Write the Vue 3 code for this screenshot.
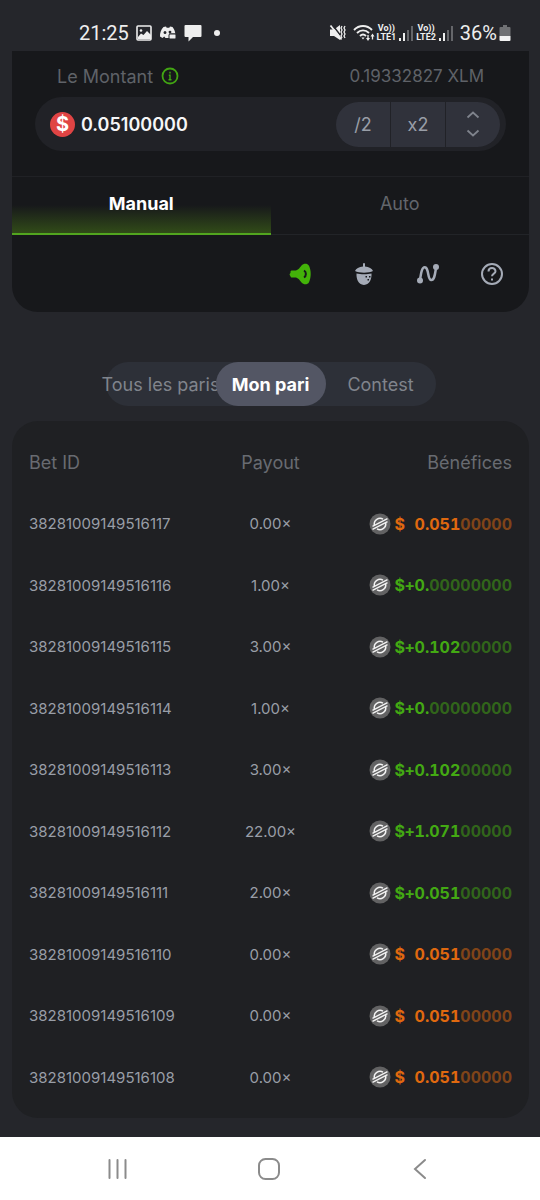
<script setup>
import { ref } from 'vue'

const amount = ref('0.05100000')
const mode = ref('Manual')
const modes = ['Manual', 'Auto']
const list = ref('Mon pari')
const lists = ['Tous les paris', 'Mon pari', 'Contest']

const bets = [
  { id: '38281009149516117', payout: '0.00', sign: '', main: '0.051', rest: '00000' },
  { id: '38281009149516116', payout: '1.00', sign: '+', main: '0.', rest: '00000000' },
  { id: '38281009149516115', payout: '3.00', sign: '+', main: '0.102', rest: '00000' },
  { id: '38281009149516114', payout: '1.00', sign: '+', main: '0.', rest: '00000000' },
  { id: '38281009149516113', payout: '3.00', sign: '+', main: '0.102', rest: '00000' },
  { id: '38281009149516112', payout: '22.00', sign: '+', main: '1.071', rest: '00000' },
  { id: '38281009149516111', payout: '2.00', sign: '+', main: '0.051', rest: '00000' },
  { id: '38281009149516110', payout: '0.00', sign: '', main: '0.051', rest: '00000' },
  { id: '38281009149516109', payout: '0.00', sign: '', main: '0.051', rest: '00000' },
  { id: '38281009149516108', payout: '0.00', sign: '', main: '0.051', rest: '00000' },
]
</script>

<template>
  <div class="screen">
    <header class="status">
      <div class="status-side">
        <span class="clock">21:25</span>
        <svg width="16" height="16" viewBox="0 0 16 16">
          <rect x="1" y="1" width="14" height="14" rx="1" fill="none" stroke="#eee" stroke-width="1.6" />
          <circle cx="5" cy="5.5" r="1.3" fill="#eee" />
          <path d="M2 12l3-3.500 2.500 1.500L11 6l4 4v4H2z" fill="#eee" />
        </svg>
        <svg width="18" height="16" viewBox="0 0 18 16">
          <path d="M4.500 2L7 1.500l.7 1.200h2.600l.7-1.200 2.500.5c1.500 1.700 2.500 4 2.800 6.500H10v4.500H6.500L5.200 11.500 3.500 13 1 11.500C.8 8 2 4.500 4.500 2z" fill="#eee" />
          <ellipse cx="6" cy="7.500" rx="1.400" ry="1.600" fill="#25262b" />
          <ellipse cx="11" cy="7" rx="1.400" ry="1.300" fill="#25262b" />
          <rect x="10" y="9" width="7" height="5" rx="1" fill="#eee" stroke="#25262b" />
        </svg>
        <svg width="18" height="18" viewBox="0 0 18 18">
          <path d="M1.500 1h15a1 1 0 011 1v10a1 1 0 01-1 1H9l-4.500 4.500V13h-3a1 1 0 01-1-1V2a1 1 0 011-1z" fill="#eee" />
        </svg>
        <span class="dot"></span>
      </div>
      <div class="status-side tight">
        <svg width="18" height="18" viewBox="0 0 18 18">
          <path d="M1 5.500h4L11 1v15L5 12H1z" fill="#eee" />
          <path d="M3.500 1l10 13" stroke="#25262b" stroke-width="1.500" />
          <path d="M1.500 1.500l11 14" stroke="#eee" stroke-width="1.800" />
          <path d="M13 2l-1 2 1 2-1 2 1 2-1 2 1 2M16 2l-1 2 1 2-1 2 1 2-1 2 1 2" fill="none" stroke="#eee" stroke-width="1.300" />
        </svg>
        <svg class="wifi" width="22" height="18" viewBox="0 0 22 18">
          <g fill="none" stroke="#eee" stroke-width="1.900">
            <path d="M1 6c5-5.300 13-5.300 18 0M4 9c3.500-3.500 8.500-3.500 12 0M7 12c2-2 4-2 6 0" />
            <path d="M15 11v4M19.500 15.500v-4" stroke-width="1.300" />
          </g>
          <path d="M8.500 13.500h3L10 15.500zM13 14h4l-2 3zM17.500 12.500h4l-2-3z" fill="#eee" />
        </svg>
        <span class="lte"><span>Vo))</span><span>LTE1</span></span>
        <svg class="bars" width="16" height="16" viewBox="0 0 16 16">
          <path d="M2 16v-3M6 16V8" stroke="#eee" stroke-width="2" />
          <path d="M10 16V5M14 16V1" stroke="#65666a" stroke-width="2" />
        </svg>
        <span class="lte"><span>Vo))</span><span>LTE2</span></span>
        <svg class="bars" width="16" height="16" viewBox="0 0 16 16">
          <path d="M2 16v-3M6 16V8" stroke="#eee" stroke-width="2" />
          <path d="M10 16V5M14 16V1" stroke="#65666a" stroke-width="2" />
        </svg>
        <span class="percent">36%</span>
        <svg width="12" height="18" viewBox="0 0 12 18">
          <path d="M4 1h4v2h2.500a1 1 0 011 1v8H.5V4a1 1 0 011-1H4z" fill="#707174" />
          <path d="M.5 12h11v4a1 1 0 01-1 1h-9a1 1 0 01-1-1z" fill="#f3f3f3" />
        </svg>
      </div>
    </header>

    <main>
      <section class="panel">
        <div class="caption">
          <label for="amount">Le Montant</label>
          <svg width="18" height="18" viewBox="0 0 18 18">
            <circle cx="9" cy="9" r="7.500" fill="none" stroke="#42a513" stroke-width="1.800" />
            <path d="M9 7.500v5.500M9 4.700v1.700M7.800 8.200H9M7.500 12.800h3" stroke="#42a513" stroke-width="1.400" />
          </svg>
          <span class="balance">0.19332827 XLM</span>
        </div>
        <div class="field">
          <span class="coin">$</span>
          <input id="amount" v-model="amount" type="text" />
          <div class="steps">
            <button type="button">/2</button>
            <button type="button">x2</button>
            <button type="button" aria-label="Ajuster">
              <svg width="14" height="26" viewBox="0 0 14 26">
                <path d="M1.500 6.500L7 1.500l5.500 5M1.500 19.500l5.500 5 5.500-5" fill="none" stroke="#7f838c" stroke-width="1.800" />
              </svg>
            </button>
          </div>
        </div>

        <div class="tabs">
          <button v-for="m in modes" :key="m" type="button" :class="{ active: m === mode }" @click="mode = m">{{ m }}</button>
        </div>

        <div class="tools">
          <button type="button" aria-label="Son">
            <svg width="24" height="24" viewBox="0 0 24 24">
              <path d="M4 8.500h3c3 0 4.500-2.500 6.500-5 2-2.300 6-2.500 7.500.3 2.300 4.800 2.300 11.600 0 16.400-1.500 2.800-5.500 2.600-7.500.3-2-2.500-3.500-5-6.500-5H4c-1 0-1.500-.5-1.500-1.300l-.8-1.200c-.2-.8 0-1.500.8-2V10c0-1 .5-1.500 1.500-1.500z" fill="#43b309" />
              <path d="M16 8.500c2.500 1.500 2.500 5.500 0 7" fill="none" stroke="#17181b" stroke-width="2" />
            </svg>
          </button>
          <button type="button" aria-label="Gland">
            <svg width="24" height="24" viewBox="0 0 24 24" fill="#a5abb7">
              <path d="M11 1.500q1-1 2 0v3c4 .3 7 2 8 4.500-4 2.300-14 2.300-18 0 1-2.500 4-4.200 8-4.500z" />
              <path d="M4.500 11.500c4 1 11 1 15 0 .3 5-1.500 11-7.500 11.500-6-.5-7.800-6.500-7.500-11.500z" />
              <path d="M13.500 14h1.500v1.500h-1.500zM17 14h1.500v1.500H17zM15.500 17h1.500v1.500h-1.500z" fill="#17181b" />
            </svg>
          </button>
          <button type="button" aria-label="Tendance">
            <svg width="24" height="24" viewBox="0 0 24 24">
              <path d="M4 18C5 11 6 4 9.500 5.500c3.500 1.500 2 12 5.500 12.500C18.500 18.500 19 12 20 6" fill="none" stroke="#a5abb7" stroke-width="2.500" />
              <circle cx="4" cy="18.500" r="3" fill="#a5abb7" />
              <circle cx="20" cy="5" r="3" fill="#a5abb7" />
            </svg>
          </button>
          <button type="button" aria-label="Aide">
            <svg width="24" height="24" viewBox="0 0 24 24" fill="none" stroke="#a5abb7" stroke-width="2">
              <circle cx="12" cy="12" r="10" />
              <path d="M8.500 9.500C8.500 5 15.500 5 15.500 9.300c0 2.500-3.500 2.200-3.500 5M12 16.500v2" />
            </svg>
          </button>
        </div>
      </section>

      <div class="switch">
        <button v-for="l in lists" :key="l" type="button" :class="{ active: l === list }" @click="list = l">{{ l }}</button>
      </div>

      <section class="bets">
        <table>
          <thead>
            <tr><th>Bet ID</th><th>Payout</th><th>Bénéfices</th></tr>
          </thead>
          <tbody>
            <tr v-for="b in bets" :key="b.id">
              <td>{{ b.id }}</td>
              <td>{{ b.payout }}×</td>
              <td>
                <div class="profit" :class="{ win: b.sign }">
                  <svg width="22" height="22" viewBox="0 0 22 22">
                    <circle cx="11" cy="11" r="10.500" fill="#626263" />
                    <g fill="none" stroke="#f2f2f2" stroke-width="1.500">
                      <path d="M5.300 12A5.800 5.800 0 0114 6.200M16.700 10A5.800 5.800 0 018 15.800" />
                      <path d="M3.500 13.300L18.500 5.700M3.500 16.300L18.500 8.700" />
                    </g>
                  </svg>
                  <span class="currency">$</span>
                  <span class="sign">{{ b.sign }}</span>
                  <span>{{ b.main }}<span class="rest">{{ b.rest }}</span></span>
                </div>
              </td>
            </tr>
          </tbody>
        </table>
      </section>
    </main>

    <nav class="system">
      <button type="button" aria-label="Récents">
        <svg width="24" height="24" viewBox="0 0 24 24">
          <path d="M3.500 3v18M11.500 3v18M19.500 3v18" stroke="#8b8b8b" stroke-width="2" stroke-linecap="round" />
        </svg>
      </button>
      <button type="button" aria-label="Accueil">
        <svg width="24" height="24" viewBox="0 0 24 24">
          <rect x="2" y="2" width="20" height="20" rx="6.500" fill="none" stroke="#8b8b8b" stroke-width="2" />
        </svg>
      </button>
      <button type="button" aria-label="Retour">
        <svg width="24" height="24" viewBox="0 0 24 24">
          <path d="M17 3l-10 9 10 9" fill="none" stroke="#8b8b8b" stroke-width="2" stroke-linecap="round" />
        </svg>
      </button>
    </nav>
  </div>
</template>

<style>
body {
  margin: 0;
  background: #25262b;
}
</style>

<style scoped>
.screen {
  box-sizing: border-box;
  min-height: 100vh;
  display: flex;
  flex-direction: column;
  background: #25262b;
  color: #999ea7;
  font-family: Inter, "Open Sans", sans-serif;
  font-size: 18px;
}
button {
  margin: 0;
  padding: 0;
  border: 0;
  background: none;
  color: inherit;
  font: inherit;
  cursor: pointer;
}
svg {
  display: block;
  flex: none;
}
.status {
  height: 36px;
  padding: 15px 29px 0 79px;
  display: flex;
  align-items: center;
  justify-content: space-between;
  color: #eee;
  font-family: Roboto, sans-serif;
  font-size: 20px;
}
.status-side {
  display: flex;
  align-items: center;
  gap: 7px;
}
.tight {
  gap: 2px;
}
.wifi {
  margin-left: 4px;
}
.dot {
  width: 6px;
  height: 6px;
  margin-left: 5px;
  border-radius: 50%;
  background: #eee;
}
.lte {
  display: flex;
  flex-direction: column;
  align-items: center;
  font-size: 9px;
  font-weight: 700;
  line-height: 9px;
}
.percent {
  margin-left: 4px;
}
main {
  padding: 0 11px 19px 12px;
}
.panel {
  border-radius: 0 0 26px 26px;
  background: #17181b;
}
.caption {
  display: flex;
  align-items: center;
  gap: 8px;
  height: 20px;
  padding: 15px 45px 11px;
  color: #5f6268;
}
.balance {
  margin-left: auto;
  font-size: 17px;
}
.field {
  display: flex;
  align-items: center;
  height: 46px;
  margin: 0 23px;
  padding: 4px 6px 4px 15px;
  border-radius: 27px;
  background: #212227;
}
.coin {
  flex: none;
  width: 25px;
  height: 25px;
  border-radius: 50%;
  background: #e04444;
  color: #fff;
  font-size: 20px;
  font-weight: 700;
  line-height: 25px;
  text-align: center;
}
.field input {
  flex: 1;
  min-width: 0;
  margin: 0;
  padding: 0 6px;
  border: 0;
  outline: 0;
  background: none;
  color: #f5f6f7;
  font: inherit;
  font-weight: 600;
}
.steps {
  display: grid;
  grid-template-columns: repeat(3, 54px);
  gap: 1px;
  height: 45px;
  overflow: hidden;
  border-radius: 23px;
}
.steps button {
  display: flex;
  align-items: center;
  justify-content: center;
  background: #30323b;
}
.tabs {
  display: grid;
  grid-template-columns: 1fr 1fr;
  margin-top: 25px;
  border-top: 1px solid #202125;
  color: #63666c;
}
.tabs button {
  height: 58px;
  padding-bottom: 4px;
  border-bottom: 1px solid #222428;
}
.tabs .active {
  padding-bottom: 3px;
  border-bottom: 2px solid #52a51f;
  background: linear-gradient(#17181b 50%, #314b18);
  color: #fff;
  font-weight: 700;
}
.tools {
  display: flex;
  align-items: center;
  justify-content: flex-end;
  gap: 40px;
  height: 77px;
  padding-right: 25px;
}
.switch {
  display: grid;
  grid-template-columns: repeat(3, 110px);
  width: max-content;
  height: 44px;
  margin: 50px auto 15px;
  border-radius: 22px;
  background: #2d3038;
  color: #80848c;
}
.switch button {
  display: flex;
  align-items: center;
  justify-content: center;
  border-radius: 22px;
  white-space: nowrap;
}
.switch .active {
  background: #535664;
  color: #fff;
  font-weight: 700;
}
.bets {
  padding: 11px 17px 10px;
  border-radius: 26px;
  background: #1f2023;
}
table {
  width: 100%;
  border-collapse: collapse;
  table-layout: fixed;
}
th,
td {
  height: 61px;
  padding: 0;
  text-align: left;
}
tr:nth-child(even) td {
  height: 62px;
}
th {
  color: #686b71;
  font-weight: 400;
}
td {
  font-size: 15px;
}
th:nth-child(2),
td:nth-child(2) {
  text-align: center;
}
th:nth-child(3) {
  text-align: right;
}
.profit {
  display: flex;
  align-items: center;
  justify-content: flex-end;
  color: #e0690f;
  font-size: 16px;
  font-variant-numeric: tabular-nums;
  font-weight: 700;
}
.win {
  color: #43a913;
}
.currency {
  width: 10px;
  margin-left: 4px;
  text-align: center;
}
.sign {
  width: 10px;
  text-align: center;
}
.rest {
  opacity: 0.5;
}
.system {
  display: grid;
  grid-template-columns: repeat(3, 1fr);
  height: 63px;
  margin-top: auto;
  padding: 0 45px 0 42px;
  background: #fff;
}
.system button {
  display: flex;
  align-items: center;
  justify-content: center;
}
</style>
